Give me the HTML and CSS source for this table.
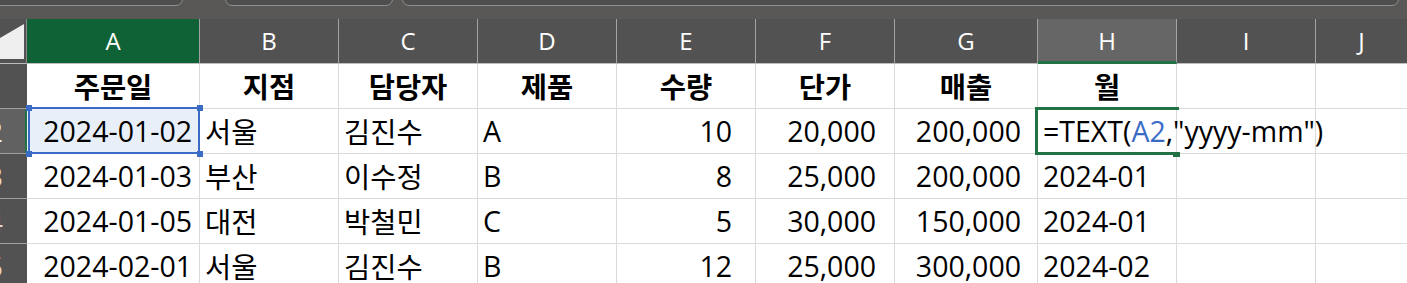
FILE: index.html
```html
<!DOCTYPE html>
<html lang="ko">
<head>
<meta charset="utf-8">
<title>Sheet</title>
<link rel="stylesheet" href="styles.css">
</head>
<body>
<div class="app">
  <div class="topbar">
    <div class="tab tab1"></div>
    <div class="tab tab2"></div>
    <div class="tab tab3"></div>
  </div>
  <div class="sheet">
    <div class="corner">
      <svg width="27" height="45" viewBox="0 0 27 45"><polygon points="24,5 24,40 0,40 0,19" fill="#efefef"/></svg>
    </div>
    <div class="ch ch-sel-a">A</div>
    <div class="ch">B</div>
    <div class="ch">C</div>
    <div class="ch">D</div>
    <div class="ch">E</div>
    <div class="ch">F</div>
    <div class="ch">G</div>
    <div class="ch ch-active">H</div>
    <div class="ch">I</div>
    <div class="ch last">J</div>

    <div class="rh"><span>1</span></div>
    <div class="c ko hd">주문일</div>
    <div class="c ko hd">지점</div>
    <div class="c ko hd">담당자</div>
    <div class="c ko hd">제품</div>
    <div class="c ko hd">수량</div>
    <div class="c ko hd">단가</div>
    <div class="c ko hd">매출</div>
    <div class="c ko hd">월</div>
    <div class="c"></div>
    <div class="c last"></div>

    <div class="rh rh-active"><span>2</span></div>
    <div class="c lat date ref">2024-01-02<i class="h tl"></i><i class="h tr"></i><i class="h bl"></i><i class="h br"></i></div>
    <div class="c ko txt">서울</div>
    <div class="c ko txt">김진수</div>
    <div class="c lat txt">A</div>
    <div class="c lat num pe">10</div>
    <div class="c lat num pf">20,000</div>
    <div class="c lat num pg">200,000</div>
    <div class="c lat txt active">=TEXT(<span class="refA">A2</span>,"yyyy-mm")<i class="fill"></i></div>
    <div class="c"></div>
    <div class="c last"></div>

    <div class="rh"><span>3</span></div>
    <div class="c lat date">2024-01-03</div>
    <div class="c ko txt">부산</div>
    <div class="c ko txt">이수정</div>
    <div class="c lat txt">B</div>
    <div class="c lat num pe">8</div>
    <div class="c lat num pf">25,000</div>
    <div class="c lat num pg">200,000</div>
    <div class="c lat txt">2024-01</div>
    <div class="c"></div>
    <div class="c last"></div>

    <div class="rh"><span>4</span></div>
    <div class="c lat date">2024-01-05</div>
    <div class="c ko txt">대전</div>
    <div class="c ko txt">박철민</div>
    <div class="c lat txt">C</div>
    <div class="c lat num pe">5</div>
    <div class="c lat num pf">30,000</div>
    <div class="c lat num pg">150,000</div>
    <div class="c lat txt">2024-01</div>
    <div class="c"></div>
    <div class="c last"></div>

    <div class="rh"><span>5</span></div>
    <div class="c lat date">2024-02-01</div>
    <div class="c ko txt">서울</div>
    <div class="c ko txt">김진수</div>
    <div class="c lat txt">B</div>
    <div class="c lat num pe">12</div>
    <div class="c lat num pf">25,000</div>
    <div class="c lat num pg">300,000</div>
    <div class="c lat txt">2024-02</div>
    <div class="c"></div>
    <div class="c last"></div>
  </div>
</div>
</body>
</html>
```

FILE: styles.css
```css
html, body {
  margin: 0;
  padding: 0;
  background: #ffffff;
}
.app {
  width: 1407px;
  height: 283px;
  overflow: hidden;
  font-family: "Noto Sans CJK KR", "Noto Sans", sans-serif;
}
.topbar {
  height: 19px;
  background: #5a5856;
  display: flex;
  overflow: hidden;
}
.tab {
  height: 14px;
  margin-top: -10px;
  border: 1px solid #8f8f8f;
  border-radius: 7px;
  background: #4e4e4e;
  flex: none;
}
.tab1 { margin-left: -20px; width: 201px; }
.tab2 { margin-left: 42px; width: 166px; }
.tab3 { margin-left: 9px; width: 995px; }

.sheet {
  display: grid;
  grid-template-columns: 27px 173px 139px 139px 139px 139px 139px 143px 139px 139px 1fr;
  grid-auto-rows: 45px;
}
.corner {
  background: #525252;
  border-right: 1px solid #8a8a8a;
  border-bottom: 1px solid #bdbdbd;
  box-sizing: border-box;
  overflow: hidden;
}
.corner svg { display: block; }
.ch {
  background: #525252;
  color: #ffffff;
  font-family: "Open Sans", "Noto Sans", sans-serif;
  font-size: 24px;
  display: flex;
  align-items: center;
  justify-content: center;
  box-sizing: border-box;
  border-right: 1px solid #a3a3a3;
  border-bottom: 1px solid #bdbdbd;
  padding-bottom: 2px;
}
.ch.last { border-right: none; }
.ch-sel-a { background: #0f6235; }
.ch-active {
  background: #666666;
  border-bottom: 3px solid #217346;
  padding-bottom: 0;
}
.rh {
  background: #525252;
  color: #e4d8cc;
  font-family: "Open Sans", "Noto Sans", sans-serif;
  font-size: 27px;
  display: flex;
  align-items: center;
  justify-content: flex-end;
  padding-right: 24px;
  overflow: hidden;
  box-sizing: border-box;
  border-bottom: 1px solid #a0a0a0;
  white-space: nowrap;
}
.rh-active {
  background: #616161;
  color: #eeeeee;
  box-shadow: inset -2px 0 0 #217346;
}
.c {
  position: relative;
  background: #ffffff;
  color: #000000;
  box-sizing: border-box;
  border-right: 1px solid #dadada;
  border-bottom: 1px solid #dadada;
  display: flex;
  align-items: center;
  white-space: nowrap;
  padding-bottom: 1px;
}
.c.last { border-right: none; }
.ko {
  font-family: "Noto Sans CJK KR", sans-serif;
  font-size: 28.5px;
}
.lat {
  font-family: "Open Sans", "Noto Sans", sans-serif;
  font-size: 28.5px;
}
.hd {
  justify-content: center;
  font-weight: 700;
}
.txt {
  padding-left: 5px;
}
.date, .num {
  justify-content: flex-end;
}
.date { padding-right: 7px; }
.pe { padding-right: 23px; }
.pf { padding-right: 18px; }
.pg { padding-right: 16px; }

.ref {
  background: #e9eff9;
}
.ref::after {
  content: "";
  position: absolute;
  left: 1px;
  top: -2px;
  right: -1px;
  bottom: -1px;
  border: 2px solid #3a6cc6;
  pointer-events: none;
}
.h {
  position: absolute;
  width: 6px;
  height: 6px;
  background: #3a6cc6;
  z-index: 2;
}
.tl { left: -1px; top: -4px; }
.tr { right: -4px; top: -4px; }
.bl { left: -1px; bottom: -4px; }
.br { right: -4px; bottom: -4px; }

.active {
  overflow: visible;
  z-index: 3;
}
.active::after {
  content: "";
  position: absolute;
  left: -3px;
  top: -2px;
  right: -3px;
  bottom: -2px;
  border: 3px solid #217346;
  border-right: none;
  pointer-events: none;
}
.fill {
  position: absolute;
  right: -4px;
  bottom: -4px;
  width: 7px;
  height: 5px;
  background: #217346;
  z-index: 4;
}
.refA { color: #3a6cc6; }
```
